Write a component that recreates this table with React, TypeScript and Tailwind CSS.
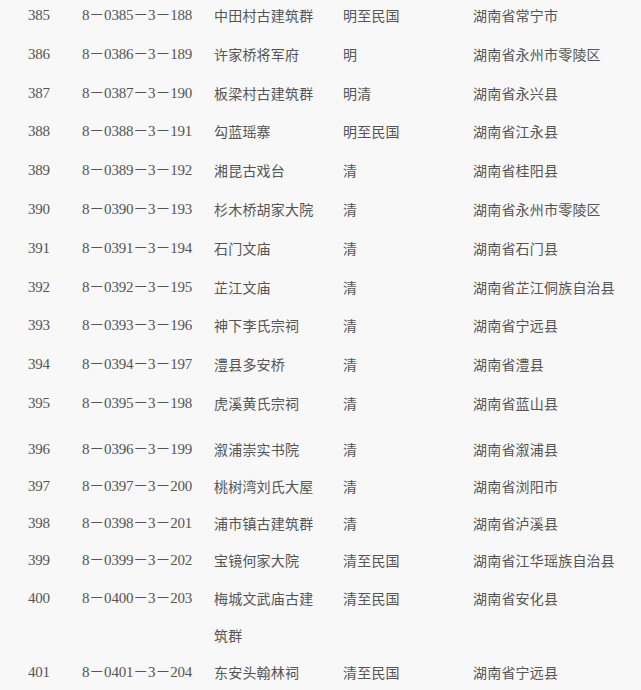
import React from "react";

type Row = { no: string; code: string; name: string; era: string; place: string };

const first: Row[] = [
  { no: "385", code: "8－0385－3－188", name: "中田村古建筑群", era: "明至民国", place: "湖南省常宁市" },
  { no: "386", code: "8－0386－3－189", name: "许家桥将军府", era: "明", place: "湖南省永州市零陵区" },
  { no: "387", code: "8－0387－3－190", name: "板梁村古建筑群", era: "明清", place: "湖南省永兴县" },
  { no: "388", code: "8－0388－3－191", name: "勾蓝瑶寨", era: "明至民国", place: "湖南省江永县" },
  { no: "389", code: "8－0389－3－192", name: "湘昆古戏台", era: "清", place: "湖南省桂阳县" },
  { no: "390", code: "8－0390－3－193", name: "杉木桥胡家大院", era: "清", place: "湖南省永州市零陵区" },
  { no: "391", code: "8－0391－3－194", name: "石门文庙", era: "清", place: "湖南省石门县" },
  { no: "392", code: "8－0392－3－195", name: "芷江文庙", era: "清", place: "湖南省芷江侗族自治县" },
  { no: "393", code: "8－0393－3－196", name: "神下李氏宗祠", era: "清", place: "湖南省宁远县" },
  { no: "394", code: "8－0394－3－197", name: "澧县多安桥", era: "清", place: "湖南省澧县" },
  { no: "395", code: "8－0395－3－198", name: "虎溪黄氏宗祠", era: "清", place: "湖南省蓝山县" },
];

const second: Row[] = [
  { no: "396", code: "8－0396－3－199", name: "溆浦崇实书院", era: "清", place: "湖南省溆浦县" },
  { no: "397", code: "8－0397－3－200", name: "桃树湾刘氏大屋", era: "清", place: "湖南省浏阳市" },
  { no: "398", code: "8－0398－3－201", name: "浦市镇古建筑群", era: "清", place: "湖南省泸溪县" },
  { no: "399", code: "8－0399－3－202", name: "宝镜何家大院", era: "清至民国", place: "湖南省江华瑶族自治县" },
  { no: "400", code: "8－0400－3－203", name: "梅城文武庙古建筑群", era: "清至民国", place: "湖南省安化县" },
  { no: "401", code: "8－0401－3－204", name: "东安头翰林祠", era: "清至民国", place: "湖南省宁远县" },
];

// scanned table: narrow serif digits, CJK text slightly spaced
const num = "[font-family:'Liberation_Serif','Noto_Sans_CJK_SC',serif] text-[15px] tracking-[-0.2px]";
const cjk = "[font-family:'Noto_Sans_CJK_SC',sans-serif] text-[14px] tracking-[0.2px]";

function Line({ r, lh }: { r: Row; lh: string }) {
  return (
    <div className={`flex items-start pl-[28px] ${lh}`}>
      <div className={`w-[54px] shrink-0 ${num}`}>{r.no}</div>
      <div className={`w-[132px] shrink-0 whitespace-nowrap ${num}`}>{r.code}</div>
      <div className={`w-[102px] mr-[27px] shrink-0 ${cjk}`}>{r.name}</div>
      <div className={`w-[130px] shrink-0 ${cjk}`}>{r.era}</div>
      <div className={`flex-1 whitespace-nowrap ${cjk}`}>{r.place}</div>
    </div>
  );
}

export default function App() {
  return (
    <div className="w-[641px] h-[690px] overflow-hidden bg-[#f8f8f8] text-[#555555]">
      <div className="-mt-[4px]">
        {first.map((r) => (
          <Line key={r.no} r={r} lh="leading-[38.8px]" />
        ))}
      </div>
      <div className="mt-[8px]">
        {second.map((r) => (
          <Line key={r.no} r={r} lh="leading-[37.2px]" />
        ))}
      </div>
    </div>
  );
}
